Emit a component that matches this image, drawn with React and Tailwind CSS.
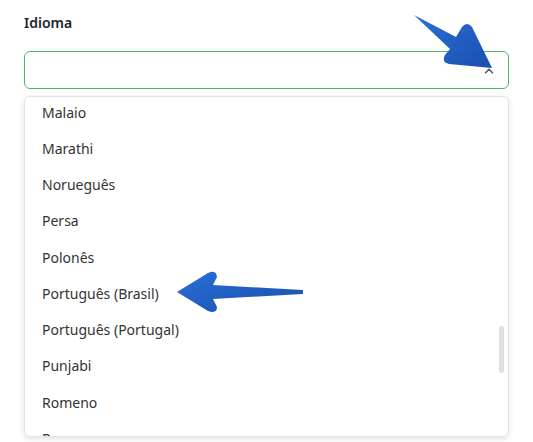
import { ChevronUp } from 'lucide-react';

const languages = [
  'Malaio',
  'Marathi',
  'Norueguês',
  'Persa',
  'Polonês',
  'Português (Brasil)',
  'Português (Portugal)',
  'Punjabi',
  'Romeno',
  'Russo',
];

function Arrows() {
  return (
    <svg className="pointer-events-none absolute left-0 top-0" width="533" height="442" viewBox="0 0 533 442">
      <defs>
        <linearGradient id="blue" x1="0" y1="0" x2="1" y2="1">
          <stop offset="0" stopColor="#2a6fd6" />
          <stop offset="1" stopColor="#1a4fae" />
        </linearGradient>
      </defs>
      <path
        d="M414,15 L456,37 L462,27 Q467,21 472,27 L492,68 L449,64 Q441,62 445,55 L450,49 Z"
        fill="url(#blue)"
      />
      <path
        d="M177,292 L208,273 Q216,269 217,277 L213,285 L303,290 L303,294 L213,299 L217,307 Q217,314 208,311 Z"
        fill="url(#blue)"
      />
    </svg>
  );
}

export default function App() {
  return (
    <div className="relative h-[442px] w-[533px] overflow-hidden bg-white font-['Noto_Sans',sans-serif] text-[#333]">
      <div className="px-6 pt-[13px]">
        <label className="block text-[14px] font-semibold leading-5 text-[#212529]">Idioma</label>
        <div className="mt-[18px] flex h-[38px] items-center justify-end rounded-[6px] border border-[#4cb866] px-3">
          <ChevronUp size={14} strokeWidth={2.5} className="mt-[2px] text-[#555]" />
        </div>
        <div className="relative mt-[7px] h-[341px] overflow-hidden rounded-[6px] border border-[#e2e2e2] shadow-[0_2px_6px_rgba(0,0,0,0.12)]">
          <ul className="-mt-[3px]">
            {languages.map((l) => (
              <li key={l} className="flex h-[36.25px] items-center px-[17px] text-[14px]">
                {l}
              </li>
            ))}
          </ul>
          <div className="absolute right-[4px] top-[229px] h-[47px] w-[5px] rounded-sm bg-[#e0e0e0]" />
        </div>
      </div>
      <Arrows />
    </div>
  );
}
